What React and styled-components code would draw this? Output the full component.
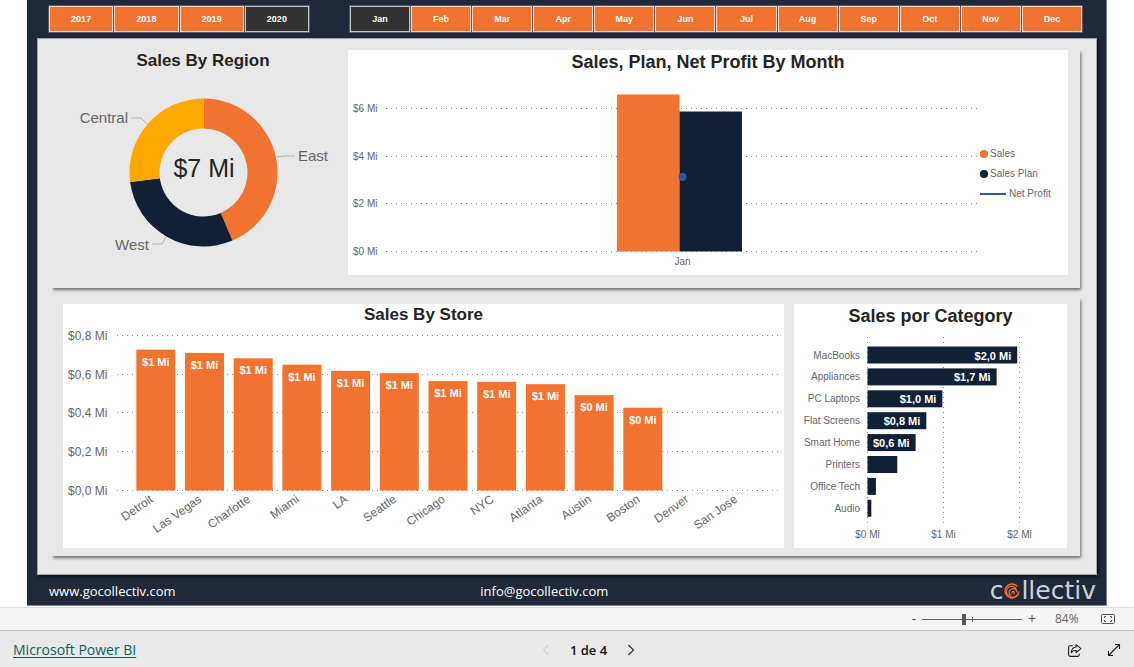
import React, { useState } from 'react';
import styled, { createGlobalStyle } from 'styled-components';

const GlobalStyle = createGlobalStyle`
  * {
    box-sizing: border-box;
  }

  body {
    margin: 0;
    background: #ffffff;
    font-family: 'Liberation Sans', Arial, sans-serif;
  }
`;

const colors = {
  orange: '#f2722f',
  navy: '#122036',
  amber: '#ffa900',
  blue: '#3257a8',
  label: '#666666',
  title: '#252423',
  grid: '#8a8a8a'
};

const Page = styled.div`
  display: flex;
  flex-direction: column;
  min-height: 100vh;
`;

const Report = styled.main`
  margin: 0 27px;
  padding: 0 9px 0 10px;
  background: #20293a;
  border: 1px solid #7c838e;
  border-width: 0 1px 1px 0;
`;

const Slicers = styled.div`
  display: flex;
  gap: 41px;
  padding: 6px 15px 6px 12px;
`;

const Slicer = styled.div`
  display: grid;
  grid-auto-flow: column;
  grid-auto-columns: minmax(0, 1fr);
  gap: 1px;
  flex: ${props => props.$grow} 1 0;
`;

const SlicerButton = styled.button`
  height: 26px;
  padding: 0;
  border: 1px solid ${props => (props.$active ? '#c4c6c9' : '#fbd9c6')};
  box-shadow: 0 0 0 1px #565b66;
  background: ${props => (props.$active ? '#333333' : colors.orange)};
  color: #ffffff;
  font: bold 9px 'Liberation Sans', Arial, sans-serif;
  cursor: pointer;
`;

const Canvas = styled.div`
  padding: 11px 16px 18px 14px;
  border: 1px solid #a5a5a5;
  background: #e8e8e8;
  box-shadow: 2px 2px 3px rgba(0, 0, 0, 0.5);
`;

const Section = styled.section`
  display: flex;
  box-shadow: 1px 2px 3px rgba(0, 0, 0, 0.55);
  clip-path: inset(0 -6px -6px 0);
`;

const TopSection = styled(Section)`
  padding: 0 12px 13px 0;
  margin-bottom: 10px;
`;

const BottomSection = styled(Section)`
  gap: 10px;
  padding: 6px 13px 8px 11px;
`;

const Panel = styled.div`
  flex: ${props => props.$grow} 1 0;
  min-width: 0;
`;

const DonutPanel = styled(Panel)`
  padding-left: 6px;
`;

const Card = styled(Panel)`
  background: #ffffff;
`;

const Title = styled.h2`
  margin: 0;
  font-size: ${props => (props.$large ? '18px' : '17px')};
  line-height: ${props => (props.$large ? '24px' : '22px')};
  color: ${colors.title};
  text-align: center;
`;

const ChartRow = styled.div`
  display: flex;
`;

const ChartArea = styled.div`
  flex: 631 1 0;
  min-width: 0;
`;

const Legend = styled.ul`
  flex: 88 1 0;
  display: flex;
  flex-direction: column;
  gap: 8px;
  margin: 0;
  padding: 74px 0 0 1px;
  list-style: none;
`;

const LegendItem = styled.li`
  display: flex;
  align-items: center;
  gap: ${props => (props.$wide ? '3px' : '2px')};
  font-size: 10px;
  line-height: 12px;
  white-space: nowrap;
  color: ${colors.label};
`;

const Dot = styled.span`
  width: 8px;
  height: 8px;
  border-radius: 50%;
  background: ${props => props.$color};
`;

const Dash = styled.span`
  width: 26px;
  height: 2px;
  background: ${props => props.$color};
`;

const Chart = styled.svg`
  display: block;
  width: 100%;
  height: auto;
  font-family: 'Liberation Sans', Arial, sans-serif;
  font-size: ${props => props.$size};
  fill: ${colors.label};
`;

const GridLine = styled.line`
  stroke: ${colors.grid};
  stroke-width: 1px;
  stroke-dasharray: 1 4;
  shape-rendering: crispEdges;
`;

const BarLabel = styled.text`
  fill: #ffffff;
  font-size: 11px;
  font-weight: bold;
`;

const ReportFooter = styled.footer`
  display: grid;
  grid-template-columns: 431fr 509fr auto;
  align-items: center;
  justify-items: start;
  height: 30px;
  padding: 2px 1px 0 12px;
`;

const ContactLink = styled.a`
  font: 13px/18px 'Open Sans', 'Noto Sans', sans-serif;
  color: #ffffff;
  text-decoration: none;
`;

const Logo = styled.div`
  display: flex;
  align-items: center;
  font: 25px/26px 'DejaVu Sans', sans-serif;
  color: #ccd1d8;
`;

const ZoomBar = styled.div`
  display: flex;
  justify-content: flex-end;
  align-items: center;
  height: 24px;
  margin-top: 1px;
  padding-right: 18px;
  border: 1px solid #dcdcdc;
  border-width: 1px 0;
  border-bottom-color: #c6c6c6;
  background: #f4f4f4;
`;

const PlainButton = styled.button`
  display: flex;
  justify-content: center;
  align-items: center;
  width: 16px;
  height: 22px;
  padding: 0;
  border: 0;
  background: transparent;
  color: ${props => props.$color || '#555555'};
  font: 14px/20px 'Open Sans', 'Noto Sans', sans-serif;
  cursor: pointer;
`;

const ZoomSlider = styled.input`
  appearance: none;
  width: 100px;
  height: 12px;
  margin: 0 2px 0 0;
  background:
    linear-gradient(#666666, #666666) 50px 4px / 1px 5px no-repeat,
    linear-gradient(#666666, #666666) 0 6px / 100% 1px no-repeat;

  &::-webkit-slider-thumb {
    appearance: none;
    width: 4px;
    height: 11px;
    background: #555555;
  }
`;

const ZoomValue = styled.span`
  width: 28px;
  margin: 0 17px 0 15px;
  font: 12px/20px 'Open Sans', 'Noto Sans', sans-serif;
  color: #666666;
`;

const StatusBar = styled.div`
  display: grid;
  grid-template-columns: 1fr auto 1fr;
  align-items: center;
  flex: 1;
  min-height: 36px;
  padding: 2px 12px 0 13px;
  background: #e9e9e9;
`;

const BrandLink = styled.a`
  justify-self: start;
  font: 14px/20px 'Open Sans', 'Noto Sans', sans-serif;
  color: #0f5f5c;
  text-underline-offset: 2px;
`;

const Pager = styled.nav`
  display: flex;
  align-items: center;
  gap: 16px;
  padding-left: 42px;
`;

const PageLabel = styled.span`
  font: 600 13px/20px 'Open Sans', 'Noto Sans', sans-serif;
  color: #111111;
`;

const Actions = styled.div`
  display: flex;
  justify-content: flex-end;
  gap: 24px;
`;

const years = ['2017', '2018', '2019', '2020'];
const months = ['Jan', 'Feb', 'Mar', 'Apr', 'May', 'Jun', 'Jul', 'Aug', 'Sep', 'Oct', 'Nov', 'Dec'];

const stores = [
  { name: 'Detroit', value: 0.73, label: '$1 Mi' },
  { name: 'Las Vegas', value: 0.713, label: '$1 Mi' },
  { name: 'Charlotte', value: 0.685, label: '$1 Mi' },
  { name: 'Miami', value: 0.652, label: '$1 Mi' },
  { name: 'LA', value: 0.62, label: '$1 Mi' },
  { name: 'Seattle', value: 0.608, label: '$1 Mi' },
  { name: 'Chicago', value: 0.567, label: '$1 Mi' },
  { name: 'NYC', value: 0.563, label: '$1 Mi' },
  { name: 'Atlanta', value: 0.551, label: '$1 Mi' },
  { name: 'Austin', value: 0.494, label: '$0 Mi' },
  { name: 'Boston', value: 0.429, label: '$0 Mi' },
  { name: 'Denver', value: 0 },
  { name: 'San Jose', value: 0 }
];

const categories = [
  { name: 'MacBooks', value: 1.96, label: '$2,0 Mi' },
  { name: 'Appliances', value: 1.69, label: '$1,7 Mi' },
  { name: 'PC Laptops', value: 0.98, label: '$1,0 Mi' },
  { name: 'Flat Screens', value: 0.77, label: '$0,8 Mi' },
  { name: 'Smart Home', value: 0.63, label: '$0,6 Mi' },
  { name: 'Printers', value: 0.39 },
  { name: 'Office Tech', value: 0.11 },
  { name: 'Audio', value: 0.05 }
];

const regions = [
  { name: 'East', from: 0, to: 157, color: colors.orange },
  { name: 'West', from: 157, to: 262.6, color: colors.navy },
  { name: 'Central', from: 262.6, to: 360, color: colors.amber }
];

const point = (cx, cy, r, deg) => {
  const a = (deg * Math.PI) / 180;
  return `${(cx + r * Math.sin(a)).toFixed(2)} ${(cy - r * Math.cos(a)).toFixed(2)}`;
};

// Ring slice between two angles, clockwise from twelve o'clock
const slicePath = (cx, cy, outer, inner, from, to) => {
  const large = to - from > 180 ? 1 : 0;
  return [
    `M${point(cx, cy, outer, from)}`,
    `A${outer} ${outer} 0 ${large} 1 ${point(cx, cy, outer, to)}`,
    `L${point(cx, cy, inner, to)}`,
    `A${inner} ${inner} 0 ${large} 0 ${point(cx, cy, inner, from)}Z`
  ].join('');
};

const RegionChart = () => (
  <Chart viewBox="0 0 290 190" $size="15px" role="img" aria-label="Sales by region">
    {regions.map(region => (
      <path
        key={region.name}
        d={slicePath(145.5, 100.5, 74, 44, region.from, region.to)}
        fill={region.color}
      />
    ))}
    <g fill="none" stroke="#b0b0b0">
      <path d="M73 46h10l6 6" />
      <path d="M219 85l7-1h11" />
      <path d="M94 172h10l4-7" />
    </g>
    <text x="70" y="51" textAnchor="end">Central</text>
    <text x="240" y="89">East</text>
    <text x="91" y="178" textAnchor="end">West</text>
    <text x="146" y="105" textAnchor="middle" fontSize="25" fill={colors.title}>$7 Mi</text>
  </Chart>
);

const MonthChart = () => (
  <Chart viewBox="0 0 631 201" $size="10px" role="img" aria-label="Sales, plan and net profit by month">
    {['$6 Mi', '$4 Mi', '$2 Mi', '$0 Mi'].map((tick, i) => (
      <g key={tick}>
        <text x="5" y={38 + Math.round(i * 47.7)}>{tick}</text>
        <GridLine x1="38" x2="631" y1={34.5 + Math.round(i * 47.7)} y2={34.5 + Math.round(i * 47.7)} />
      </g>
    ))}
    <rect x="269" y="20.5" width="62.5" height="157" fill={colors.orange} />
    <rect x="331.5" y="37.5" width="62.5" height="140" fill={colors.navy} />
    <circle cx="334.5" cy="103" r="4" fill={colors.blue} />
    <text x="334.5" y="191" textAnchor="middle">Jan</text>
  </Chart>
);

const StoreChart = () => {
  const base = 164.5;
  const scale = 193;
  const step = 48.7;
  return (
    <Chart viewBox="0 0 721 222" $size="12px" role="img" aria-label="Sales by store">
      {[0.8, 0.6, 0.4, 0.2, 0].map(tick => {
        const y = Math.round(base - tick * scale);
        return (
          <g key={tick}>
            <text x="5" y={y + 4}>{`$${tick.toFixed(1).replace('.', ',')} Mi`}</text>
            <GridLine x1="54" x2="715" y1={y - 0.5} y2={y - 0.5} />
          </g>
        );
      })}
      {stores.map((store, i) => {
        const center = 92.8 + i * step;
        const top = base - store.value * scale;
        return (
          <g key={store.name}>
            <rect x={center - 19.5} y={top} width="39" height={base - top} fill={colors.orange} />
            {store.label && (
              <BarLabel x={center} y={top + 16} textAnchor="middle">{store.label}</BarLabel>
            )}
            <text
              textAnchor="end"
              transform={`translate(${center - 2} 175) rotate(-35)`}
            >
              {store.name}
            </text>
          </g>
        );
      })}
    </Chart>
  );
};

const CategoryChart = () => {
  const left = 73.5;
  const scale = 76.4;
  return (
    <Chart viewBox="0 0 273 220" $size="10px" role="img" aria-label="Sales per category">
      {[0, 1, 2].map(tick => {
        const x = Math.round(left + tick * scale) - 0.5;
        return (
          <g key={tick}>
            <GridLine x1={x} x2={x} y1="9" y2="198" />
            <text x={x} y="210" textAnchor="middle">{`$${tick} Mi`}</text>
          </g>
        );
      })}
      {categories.map((category, i) => {
        const top = 18.5 + i * 21.9;
        const width = category.value * scale;
        return (
          <g key={category.name}>
            <text x="66" y={top + 12} textAnchor="end">{category.name}</text>
            <rect x={left} y={top} width={width} height="17" fill={colors.navy} />
            {category.label && (
              <BarLabel x={left + width - 6} y={top + 13} textAnchor="end">{category.label}</BarLabel>
            )}
          </g>
        );
      })}
    </Chart>
  );
};

const LogoMark = () => (
  <svg width="18" height="18" viewBox="0 0 18 18" fill="none" stroke="#e8703a" strokeLinecap="round">
    <path d="M16 10a7 7 0 1 1-2-6" strokeWidth="1.4" />
    <path d="M15 12a6 6 0 0 1-10 1 5 5 0 0 1 1-8 5 5 0 0 1 7 2" strokeWidth="1.3" />
    <path d="M14 10a4 4 0 0 0-7-2 3 3 0 0 0 1 5" strokeWidth="1.3" />
    <path d="M9 11a1 1 0 0 1 2-1v2" strokeWidth="1.3" />
  </svg>
);

const App = () => {
  const [year, setYear] = useState('2020');
  const [month, setMonth] = useState('Jan');
  const [zoom, setZoom] = useState(84);

  return (
    <Page>
      <GlobalStyle />
      <Report>
        <Slicers>
          <Slicer $grow={260} role="group" aria-label="Year">
            {years.map(item => (
              <SlicerButton key={item} type="button" $active={item === year} onClick={() => setYear(item)}>
                {item}
              </SlicerButton>
            ))}
          </Slicer>
          <Slicer $grow={732} role="group" aria-label="Month">
            {months.map(item => (
              <SlicerButton key={item} type="button" $active={item === month} onClick={() => setMonth(item)}>
                {item}
              </SlicerButton>
            ))}
          </Slicer>
        </Slicers>

        <Canvas>
          <TopSection>
            <DonutPanel $grow={290}>
              <Title>Sales By Region</Title>
              <RegionChart />
            </DonutPanel>
            <Card $grow={720}>
              <Title $large>Sales, Plan, Net Profit By Month</Title>
              <ChartRow>
                <ChartArea>
                  <MonthChart />
                </ChartArea>
                <Legend>
                  <LegendItem><Dot $color={colors.orange} />Sales</LegendItem>
                  <LegendItem><Dot $color={colors.navy} />Sales Plan</LegendItem>
                  <LegendItem $wide><Dash $color={colors.blue} />Net Profit</LegendItem>
                </Legend>
              </ChartRow>
            </Card>
          </TopSection>

          <BottomSection>
            <Card $grow={721}>
              <Title>Sales By Store</Title>
              <StoreChart />
            </Card>
            <Card $grow={273}>
              <Title $large>Sales por Category</Title>
              <CategoryChart />
            </Card>
          </BottomSection>
        </Canvas>

        <ReportFooter>
          <ContactLink href="#website">www.gocollectiv.com</ContactLink>
          <ContactLink href="#email">info@gocollectiv.com</ContactLink>
          <Logo>
            <span>c</span>
            <LogoMark />
            <span>llectiv</span>
          </Logo>
        </ReportFooter>
      </Report>

      <ZoomBar>
        <PlainButton type="button" aria-label="Zoom out" onClick={() => setZoom(Math.max(10, zoom - 10))}>-</PlainButton>
        <ZoomSlider
          type="range"
          aria-label="Zoom"
          min="0"
          max="200"
          value={zoom}
          onChange={e => setZoom(Number(e.target.value))}
        />
        <PlainButton type="button" aria-label="Zoom in" onClick={() => setZoom(Math.min(200, zoom + 10))}>+</PlainButton>
        <ZoomValue>{zoom}%</ZoomValue>
        <PlainButton type="button" aria-label="Fit to page" onClick={() => setZoom(84)}>
          <svg width="16" height="12" viewBox="0 0 16 12" fill="none" stroke="#555555">
            <rect x="1.5" y="1.5" width="13" height="9" rx="1" />
            <path d="M6 3.5H4.5V5M4.5 7v1.5H6M10 3.5h1.5V5M11.5 7v1.5H10" />
          </svg>
        </PlainButton>
      </ZoomBar>

      <StatusBar>
        <BrandLink href="#powerbi">Microsoft Power BI</BrandLink>
        <Pager aria-label="Pages">
          <PlainButton type="button" aria-label="Previous page" $color="#c4c4c4">
            <svg width="8" height="12" viewBox="0 0 8 12" fill="none" stroke="currentColor">
              <path d="M6.5 1L1.5 6l5 5" />
            </svg>
          </PlainButton>
          <PageLabel>1 de 4</PageLabel>
          <PlainButton type="button" aria-label="Next page" $color="#333333">
            <svg width="8" height="12" viewBox="0 0 8 12" fill="none" stroke="currentColor" strokeWidth="1.2">
              <path d="M1.5 1l5 5-5 5" />
            </svg>
          </PlainButton>
        </Pager>
        <Actions>
          <PlainButton type="button" aria-label="Share" $color="#1b1b1b">
            <svg width="15" height="15" viewBox="0 0 14 14" fill="none" stroke="currentColor" strokeLinejoin="round">
              <path d="M5.5 2.5H3A1.5 1.5 0 0 0 1.5 4v7A1.5 1.5 0 0 0 3 12.5h7a1.5 1.5 0 0 0 1.5-1.5v-1" />
              <path d="M8.5 1.5L13 5.2 8.500 9V6.800C6.500 6.800 5 7.500 4 9c.2-3 1.800-5 4.500-5.300z" />
            </svg>
          </PlainButton>
          <PlainButton type="button" aria-label="Full screen" $color="#1b1b1b">
            <svg width="14" height="14" viewBox="0 0 14 14" fill="none" stroke="currentColor" strokeWidth="1.1">
              <path d="M1.5 12.5l11-11M8 1.5h4.5V6M1.5 8v4.5H6" />
            </svg>
          </PlainButton>
        </Actions>
      </StatusBar>
    </Page>
  );
};

export default App;
